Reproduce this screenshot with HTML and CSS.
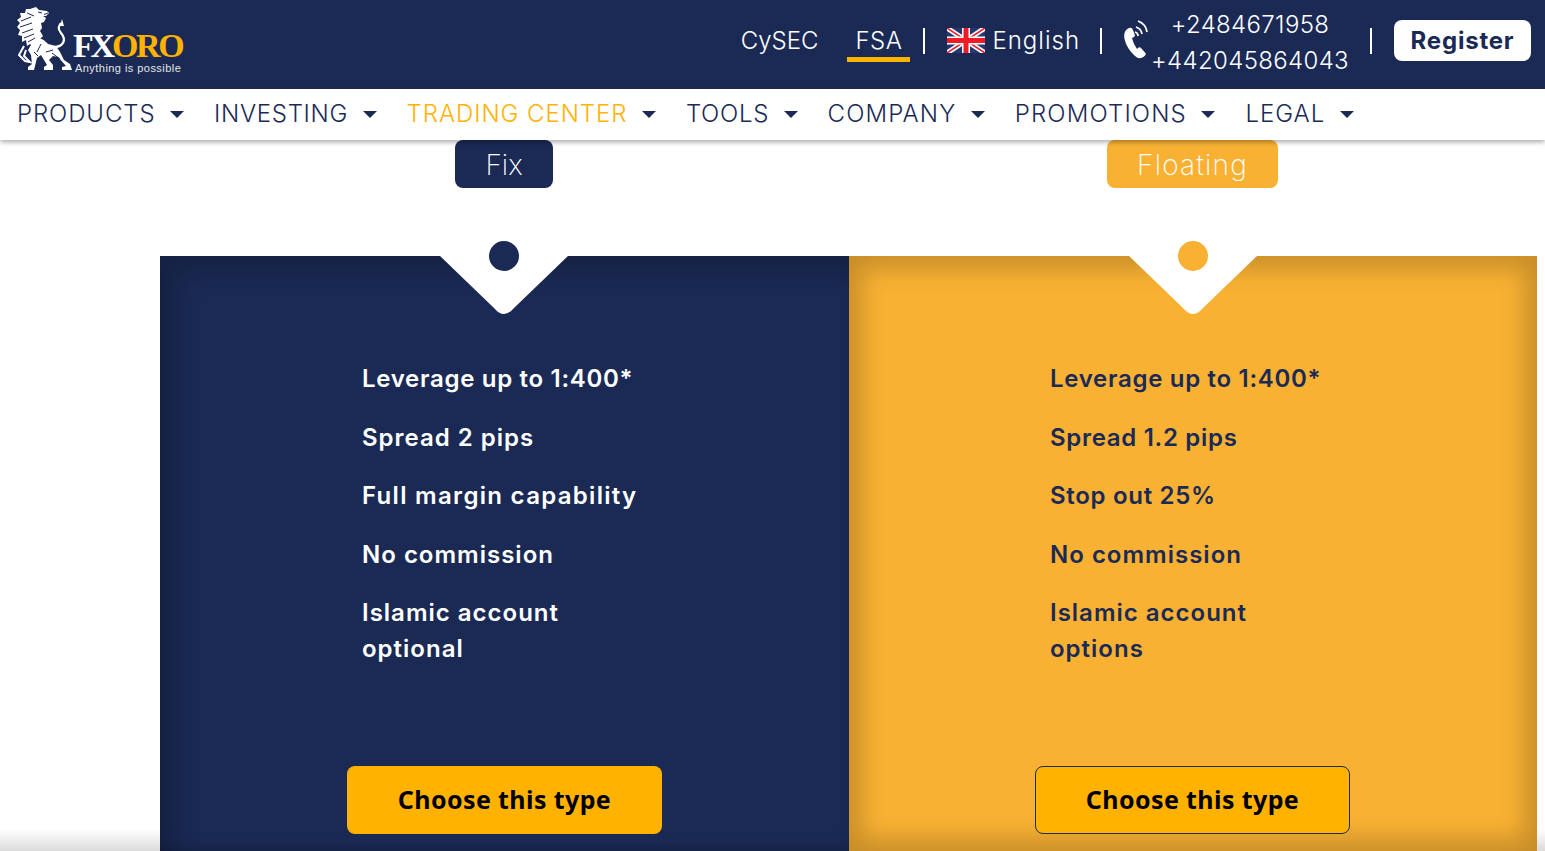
FILE: index.html
```html
<!DOCTYPE html>
<html lang="en">
<head>
<meta charset="utf-8">
<title>FXORO</title>
<link rel="stylesheet" href="styles.css">
</head>
<body>
<header class="top">
  <a class="logo">
    <svg class="lion" viewBox="16 6 58 68" width="58" height="68" aria-hidden="true">
      <path class="lion-body" d="M35 38 C42 38 44 40 48 44 L56 46 L60 52 L64 60 L70 64 L72 70 L62 70 L62 67 L66 66 L58 57 L53 56 L49 60 L53 65 L53 70 L44 70 L44 67 L47 65 L41 55 L37 58 L36 62 L34 70 L28 70 L28 67 L32 64 L31 55 L28 50 Z"/>
      <path class="lion-body" d="M30 9 L36 7 L39 10 L47 11 L49 13 L46 16 L43 16 L46 18 L44 22 L41 23 L42 28 L40 31 L43 36 L39 40 L33 47 L30 44 L27 46 L26 40 L22 42 L22 36 L18 35 L20 30 L17 27 L20 23 L17 20 L21 17 L20 13 L25 13 L26 9 Z"/>
      <path class="lion-tail" d="M54 47 C63 47 67 40 61 33 C57 28 59 26 61 23"/>
      <path class="lion-tuft" d="M60 26 L62 19 L64 26 Z"/>
      <path class="lion-leg" d="M24 46 L19 55 L25 61 L30 62 L24 56 L26 50"/>
      <path class="lion-cut" d="M21 21 L31 17 M20 27 L32 23 M22 33 L33 29 M24 38 L34 34 M28 42 L35 38 M27 13 L34 16 M38 12 L42 13 M44 14.500 L48 13 M41 44 L37 52 M46 52 L53 50 M34 52 L38 56 M60 59 L52 53"/>
    </svg>
    <span class="logo-text">
      <span class="wordmark"><span class="wordmark-white">FX</span><span class="wordmark-gold">ORO</span></span>
      <span class="tagline">Anything is possible</span>
    </span>
  </a>
  <div class="top-right">
    <a class="reg-link">CySEC</a>
    <a class="reg-link reg-active">FSA</a>
    <span class="sep sep-a"></span>
    <a class="lang">
      <svg class="flag" viewBox="0 0 38 25" width="38" height="25" aria-hidden="true">
        <rect width="38" height="25" fill="#26386f"/>
        <path d="M0 0 L38 25 M38 0 L0 25" stroke="#fff" stroke-width="5"/>
        <path d="M0 0 L38 25 M38 0 L0 25" stroke="#e8202c" stroke-width="1.6"/>
        <path d="M19 0 V25 M0 12.5 H38" stroke="#fff" stroke-width="8"/>
        <path d="M19 0 V25 M0 12.5 H38" stroke="#ee1c25" stroke-width="5"/>
      </svg>
      <span class="lang-name">English</span>
    </a>
    <span class="sep sep-b"></span>
    <svg class="phone" viewBox="0 0 24 40" width="24" height="40" aria-hidden="true">
      <path class="phone-body" d="M4 9.500 C1 11 -.5 15 .5 20 C2 27 7 34 13 38.500 C15.500 40 18.500 39 21 36.500 C22 35.500 22 34.500 21 33.500 L17 29 C16 28 15 28 14 29 L13 30 C11 27 9 23 8 19 L10 18 C11 17 11 16 10.500 15 L8.500 10 C7.500 8.500 5.500 8.500 4 9.500 Z"/>
      <path class="phone-wave" d="M11 13 A4 4 0 0 1 14 17 M12 8 A9 9 0 0 1 18 15 M14 2 A14 14 0 0 1 23 13"/>
    </svg>
    <div class="phones">
      <span>+2484671958</span>
      <span>+442045864043</span>
    </div>
    <span class="sep sep-c"></span>
    <a class="register">Register</a>
  </div>
</header>

<nav class="menu">
  <a class="menu-item item-products">PRODUCTS<i class="caret"></i></a>
  <a class="menu-item item-investing">INVESTING<i class="caret"></i></a>
  <a class="menu-item item-trading menu-active">TRADING CENTER<i class="caret"></i></a>
  <a class="menu-item item-tools">TOOLS<i class="caret"></i></a>
  <a class="menu-item item-company">COMPANY<i class="caret"></i></a>
  <a class="menu-item item-promos">PROMOTIONS<i class="caret"></i></a>
  <a class="menu-item item-legal">LEGAL<i class="caret"></i></a>
</nav>

<main class="pricing">
  <div class="tabs">
    <div class="tab-cell"><a class="tab tab-fix">Fix</a></div>
    <div class="tab-cell"><a class="tab tab-floating">Floating</a></div>
  </div>
  <div class="panels">
    <section class="panel panel-navy">
      <svg class="notch" viewBox="0 0 128 58" width="128" height="58" aria-hidden="true"><path d="M0 0 L54 52 Q64 64 74 52 L128 0 Z"/></svg>
      <span class="dot"></span>
      <ul class="features">
        <li class="feature-tight">Leverage up to 1:400*</li>
        <li>Spread 2 pips</li>
        <li class="feature-wide">Full margin capability</li>
        <li>No commission</li>
        <li>Islamic account<br>optional</li>
      </ul>
      <a class="choose">Choose this type</a>
    </section>
    <section class="panel panel-orange">
      <svg class="notch" viewBox="0 0 128 58" width="128" height="58" aria-hidden="true"><path d="M0 0 L54 52 Q64 64 74 52 L128 0 Z"/></svg>
      <span class="dot"></span>
      <ul class="features">
        <li class="feature-tight">Leverage up to 1:400*</li>
        <li class="feature-tight">Spread 1.2 pips</li>
        <li class="feature-tight">Stop out 25%</li>
        <li>No commission</li>
        <li>Islamic account<br>options</li>
      </ul>
      <a class="choose choose-outline">Choose this type</a>
    </section>
  </div>
</main>
</body>
</html>
```
FILE: styles.css
```css
* { box-sizing: border-box; }
html, body { margin: 0; height: 851px; overflow: hidden; background: #fff; }
body { font-family: Inter, "Liberation Sans", sans-serif; color: #1b2a55; }

.top {
  height: 89px;
  background: #1b2a55;
  color: #fff;
  display: flex;
  align-items: center;
  justify-content: space-between;
  padding: 0 14px 0 16px;
}
.logo { display: flex; align-items: flex-start; height: 68px; margin-bottom: 10px; }
.lion { display: block; flex: none; }
.lion-body { fill: #fff; }
.lion-tail { fill: none; stroke: #fff; stroke-width: 2.2; }
.lion-tuft { fill: #fff; }
.lion-leg { fill: none; stroke: #fff; stroke-width: 2; }
.lion-cut { fill: none; stroke: #1b2a55; stroke-width: 1; }
.logo-text { display: flex; flex-direction: column; margin-left: -1px; padding-top: 26px; }
.wordmark { font: 700 34px/28px "Liberation Serif", serif; white-space: nowrap; }
.wordmark-white { color: #fff; letter-spacing: -3.2px; }
.wordmark-gold { color: #ffb300; letter-spacing: -2.4px; }
.tagline { font: 400 11px/13px "Liberation Sans", sans-serif; color: #e6e6e6; letter-spacing: .45px; margin: 2px 0 0 2px; white-space: nowrap; }

.top-right { display: flex; align-items: center; font-size: 24px; font-weight: 300; margin-top: -8px; }
.reg-link { line-height: 36px; }
.reg-active {
  margin-left: 29px;
  padding: 0 8px;
  border-bottom: 5px solid #ffb300;
  height: 39px;
  margin-top: 3px;
  letter-spacing: .5px;
}
.sep { width: 2px; height: 26px; background: #fff; flex: none; }
.sep-a { margin: 0 22px 0 13px; }
.sep-b { margin: 0 22px 0 20px; }
.sep-c { margin: 0 22px 0 21px; }
.lang { display: flex; align-items: center; gap: 7px; }
.lang-name { letter-spacing: 1px; }
.flag { display: block; }
.phone { display: block; flex: none; margin-right: 3px; margin-top: -4px; }
.phone-body { fill: #fff; }
.phone-wave { fill: none; stroke: #fff; stroke-width: 1.8; }
.phones { display: flex; flex-direction: column; align-items: center; line-height: 36px; letter-spacing: .35px; margin-top: 4px; }
.register {
  display: flex;
  align-items: center;
  justify-content: center;
  width: 137px;
  height: 41px;
  background: #fff;
  color: #1b2a55;
  border-radius: 8px;
  font-weight: 700;
  letter-spacing: .8px;
}

.menu {
  position: relative;
  z-index: 2;
  height: 51px;
  background: #fff;
  box-shadow: 0 2px 5px rgba(0, 0, 0, .35);
  display: flex;
  align-items: center;
  gap: 30px;
  padding: 0 0 2px 17px;
  font-size: 24px;
  font-weight: 300;
  color: #1b2a55;
}
.menu-item { display: flex; align-items: center; gap: 14.5px; white-space: nowrap; }
.item-products { letter-spacing: .9px; }
.item-investing { letter-spacing: .7px; }
.item-trading { letter-spacing: .93px; }
.item-tools { letter-spacing: .7px; }
.item-company { letter-spacing: 1.1px; }
.item-promos { letter-spacing: 1.15px; }
.item-legal { letter-spacing: 1px; }
.menu-active { color: #ffb300; }
.caret {
  width: 0;
  height: 0;
  border-left: 7px solid transparent;
  border-right: 7px solid transparent;
  border-top: 7px solid #1b2a55;
  flex: none;
  margin-top: 2px;
}

.pricing { position: relative; height: 711px; padding: 0 8px 0 160px; }
.pricing::after {
  content: "";
  position: absolute;
  left: 0;
  right: 0;
  bottom: 0;
  height: 22px;
  background: linear-gradient(to bottom, rgba(0, 0, 0, 0), rgba(0, 0, 0, .14));
}
.tabs { display: grid; grid-template-columns: 689px 688px; height: 116px; }
.tab-cell { display: flex; justify-content: center; align-items: flex-start; padding-right: 1px; }
.tab {
  display: flex;
  align-items: center;
  justify-content: center;
  height: 48px;
  padding-top: 1px;
  border-radius: 8px;
  color: #fff;
  font-size: 28px;
  font-weight: 200;
}
.tab-fix { width: 98px; background: #1b2a55; }
.tab-floating { width: 171px; background: #f8b133; letter-spacing: 1.2px; }

.panels { display: grid; grid-template-columns: 689px 688px; height: 595px; }
.panel {
  position: relative;
  z-index: 1;
  display: flex;
  flex-direction: column;
  align-items: center;
  padding-top: 105px;
  font-size: 24px;
  font-weight: 600;
}
.panel-navy {
  background: #1b2a55;
  color: #fff;
  box-shadow: inset 16px 16px 24px rgba(0, 0, 0, .2), inset 0 -10px 18px -10px rgba(0, 0, 0, .25);
}
.panel-orange { background: #f8b133; color: #1b2a55; box-shadow: inset 0 0 24px 12px rgba(0, 0, 0, .2); }
.notch { position: absolute; top: 0; left: 50%; margin-left: -64px; fill: #fff; }
.dot { position: absolute; top: -15px; left: 50%; margin-left: -15px; width: 30px; height: 30px; border-radius: 50%; }
.panel-navy .notch { margin-left: -64.5px; }
.panel-navy .dot { background: #1b2a55; margin-left: -15.5px; }
.panel-orange .dot { background: #f8b133; }
.features { list-style: none; margin: 0 0 99px; padding: 0 0 0 202px; width: 100%; height: 306px; line-height: 36px; letter-spacing: 1px; }
.panel-orange .features { padding-left: 201px; }
.features li { margin-bottom: 22.5px; }
.features .feature-tight { letter-spacing: .7px; }
.features .feature-wide { letter-spacing: 1.3px; }
.choose {
  display: flex;
  align-items: center;
  justify-content: center;
  flex: none;
  width: 315px;
  height: 68px;
  padding-bottom: 3px;
  border-radius: 8px;
  background: #ffb300;
  color: #000;
  font-family: "Noto Sans", sans-serif;
  font-size: 25px;
  font-weight: 700;
  letter-spacing: .4px;
}
.choose-outline { border: 1px solid #1b2a55; margin-right: 1px; }
```
